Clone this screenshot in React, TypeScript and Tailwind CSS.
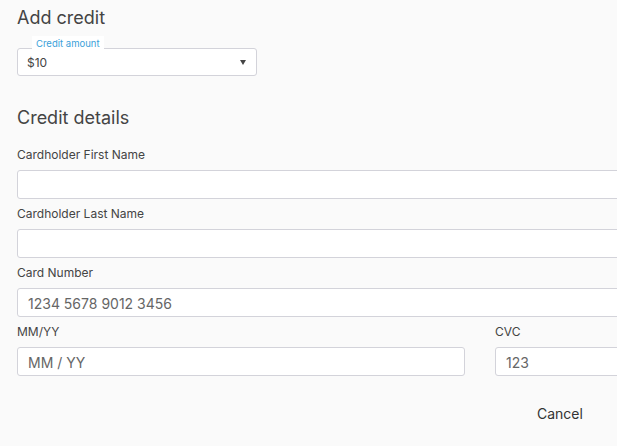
export default function App() {
  const field = 'block w-full h-[29px] rounded-[3px] border border-[#d3d3da] bg-white px-[10px] pt-[2px] text-[14px] text-[#555] placeholder:text-[#666] outline-none'
  const label = 'block text-[12px] leading-[16px] text-[#444]'

  return (
    <div className="min-h-[446px] w-[617px] overflow-hidden bg-[#fafafa] font-['Inter',sans-serif] text-[#444]">
      <div className="w-[720px] pl-[17px] pt-[6px]">
        <h1 className="text-[18px] leading-[24px] text-[#444]">Add credit</h1>

        {/* Credit amount select */}
        <div className="relative mt-[18px] w-[240px]">
          <span className="absolute left-[15px] top-[-12px] bg-white px-[4px] pt-[2px] text-[9.5px] leading-[12px] text-[#3a9fd9]">
            Credit amount
          </span>
          <div className="flex h-[28px] items-center justify-between rounded-[3px] border border-[#d3d3da] bg-white pl-[9px] pr-[10px] pt-[1px]">
            <span className="text-[12px] text-[#444]">$10</span>
            <svg width="6" height="5" viewBox="0 0 6 5">
              <path d="M0 0h6L3 5z" fill="#444" />
            </svg>
          </div>
        </div>

        <h2 className="mt-[30px] text-[18px] leading-[24px] text-[#444]">Credit details</h2>

        <div className="w-[687px]">
          <label className={`${label} mt-[17px]`}>Cardholder First Name</label>
          <input className={`${field} mt-[7px]`} />

          <label className={`${label} mt-[7px]`}>Cardholder Last Name</label>
          <input className={`${field} mt-[7px]`} />

          <label className={`${label} mt-[7px]`}>Card Number</label>
          <input className={`${field} mt-[7px]`} placeholder="1234 5678 9012 3456" />

          <div className="mt-[7px] grid grid-cols-[448px_1fr] gap-x-[30px]">
            <div>
              <label className={label}>MM/YY</label>
              <input className={`${field} mt-[7px]`} placeholder="MM / YY" />
            </div>
            <div>
              <label className={label}>CVC</label>
              <input className={`${field} mt-[7px]`} placeholder="123" />
            </div>
          </div>

          <div className="mt-[27px] flex pl-[520px]">
            <button className="h-[22px] text-[14px] leading-[22px] text-[#333]">Cancel</button>
          </div>
        </div>
      </div>
    </div>
  )
}
